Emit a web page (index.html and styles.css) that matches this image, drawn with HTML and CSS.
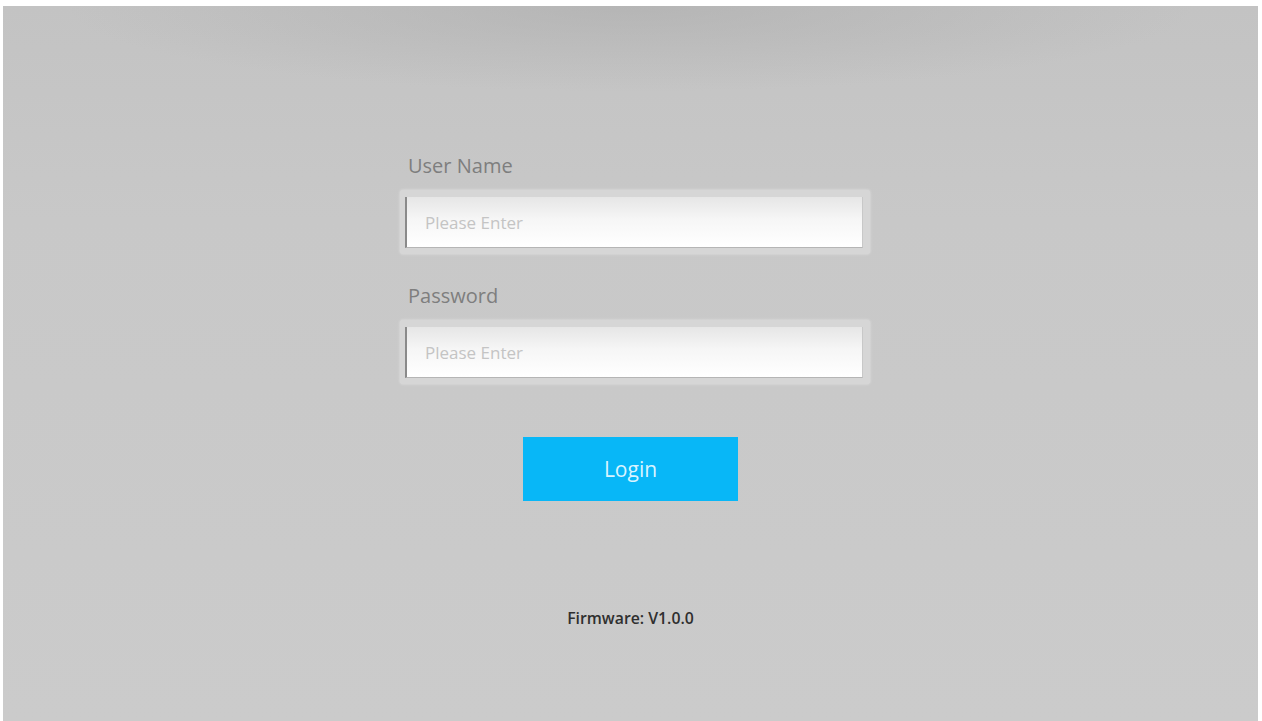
FILE: index.html
```html
<!DOCTYPE html>
<html>
<head>
<meta charset="utf-8">
<link rel="stylesheet" href="styles.css">
</head>
<body>
<div class="screen">
  <form class="login">
    <label class="label">User Name</label>
    <div class="frame"><input class="field" type="text" placeholder="Please Enter"></div>
    <label class="label label-pw">Password</label>
    <div class="frame"><input class="field" type="password" placeholder="Please Enter"></div>
    <button class="btn" type="button">Login</button>
  </form>
  <div class="firmware">Firmware: V1.0.0</div>
</div>
</body>
</html>
```

FILE: styles.css
```css
html, body {
  margin: 0;
  padding: 0;
  height: 100%;
  background: #ffffff;
}
body {
  padding: 6px 4px 0 3px;
  box-sizing: border-box;
  font-family: "Open Sans", "Noto Sans", sans-serif;
}
.screen {
  height: 100%;
  background:
    radial-gradient(ellipse 45% 12% at 50% 0%, rgba(170,170,170,0.55), rgba(170,170,170,0) 100%),
    linear-gradient(to bottom, #c3c3c3 0%, #c8c8c8 30%, #cbcbcb 100%);
  display: flex;
  flex-direction: column;
  align-items: center;
  box-sizing: border-box;
  padding-top: 148px;
}
.login {
  width: 470px;
  display: flex;
  flex-direction: column;
  margin-left: 9px;
}
.label {
  font-size: 20px;
  color: #7e7e7e;
  padding-left: 8px;
  height: 24px;
  line-height: 24px;
  margin-bottom: 12px;
}
.label-pw {
  margin-top: 30px;
  margin-bottom: 12px;
}
.frame {
  background: #d6d6d6;
  padding: 7px 7px 6px 5px;
  border-radius: 3px;
  box-shadow: 0 0 3px rgba(255,255,255,0.5);
}
.field {
  display: block;
  width: 100%;
  box-sizing: border-box;
  height: 51px;
  border: none;
  border-left: 2px solid #8a8a8a;
  border-bottom: 1px solid #b5b5b5;
  border-right: 1px solid #c8c8c8;
  background: linear-gradient(to bottom, #e6e6e6 0%, #f6f6f6 45%, #ffffff 100%);
  padding: 0 0 0 18px;
  font-family: "Open Sans", "Noto Sans", sans-serif;
  font-size: 17px;
  color: #555;
  outline: none;
}
.field::placeholder {
  color: #c4c4c4;
}
.btn {
  align-self: center;
  margin-top: 53px;
  width: 215px;
  height: 64px;
  border: none;
  background: #08b7f7;
  color: #d9f4ff;
  font-family: "Open Sans", "Noto Sans", sans-serif;
  font-size: 21px;
  margin-right: 9px;
  padding: 0;
}
.firmware {
  margin-top: 106px;
  font-size: 15.8px;
  color: #2f2f2f;
  font-weight: 600;
}
```
